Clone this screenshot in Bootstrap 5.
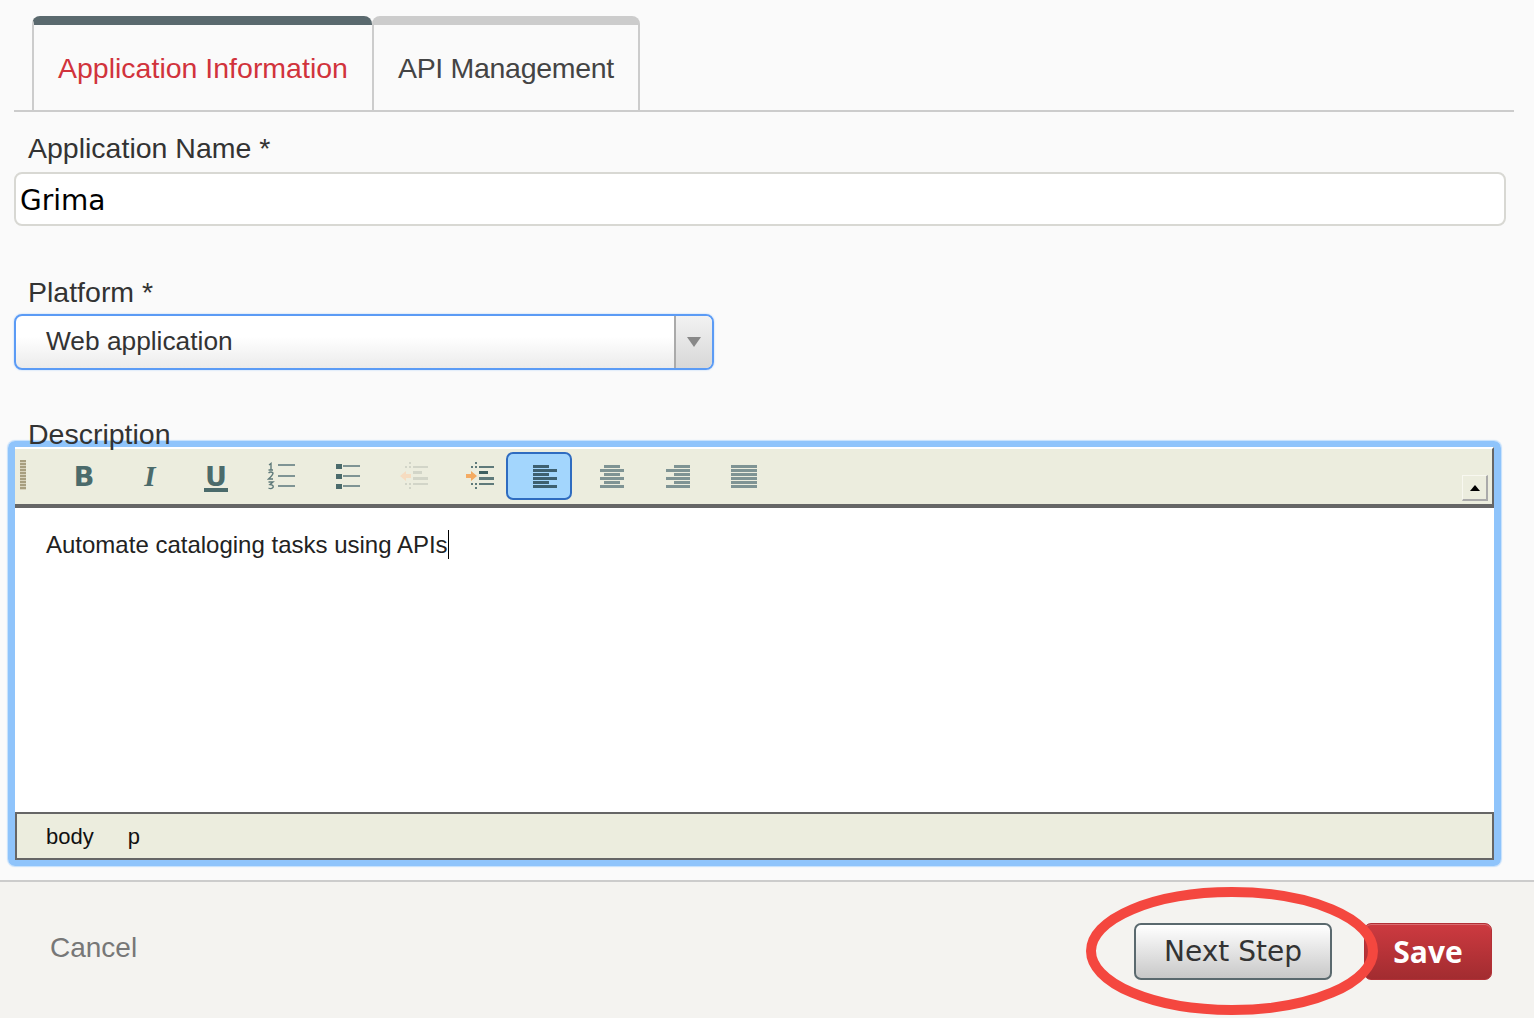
<!DOCTYPE html>
<html lang="en">

<head>
    <meta charset="UTF-8" />
    <title>Application Information</title>
    <link href="https://cdn.jsdelivr.net/npm/bootstrap@5.3.2/dist/css/bootstrap.min.css" rel="stylesheet" />
    <style>
        body {
            background: #fafafa;
            font-family: "Liberation Sans", Arial, sans-serif;
            color: #333;
            overflow: hidden;
        }

        .app-tabs {
            margin: 16px 20px 0 14px;
            padding-left: 18px;
            border-bottom: 2px solid #ccc;
            height: 96px;
            flex-wrap: nowrap;
        }

        .app-tabs .nav-link {
            height: 96px;
            margin: 0;
            padding: 21px 24px 0 24px;
            font-size: 28.5px;
            letter-spacing: -0.3px;
            line-height: 44px;
            color: #444;
            background: transparent;
            border-width: 9px 2px 0 2px;
            border-style: solid;
            border-color: #ccc;
            border-radius: 8px 8px 0 0;
        }

        .app-tabs .nav-link.active {
            letter-spacing: 0;
            color: #d1333c;
            background: transparent;
            border-color: #5a696e #ccc #ccc #ccc;
            border-right-width: 0;
        }

        .field-label {
            display: block;
            margin: 0;
            padding-left: 28px;
            font-size: 28.5px;
            line-height: 40px;
            color: #333;
        }

        .label-name {
            margin-top: 16px;
        }

        .label-platform {
            margin-top: 46px;
            margin-bottom: 2px;
        }

        .label-desc {
            position: relative;
            z-index: 1;
            margin-top: 44px;
            margin-bottom: -13px;
        }

        .name-input {
            width: 1492px;
            margin: 4px 0 0 14px;
            height: 54px;
            padding: 2px 4px 0;
            font-family: "DejaVu Sans", sans-serif;
            font-size: 28px;
            color: #000;
            border: 2px solid #d8d8d3;
            border-radius: 8px;
        }

        .platform-box {
            width: 700px;
            height: 56px;
            margin-left: 14px;
            border: 2px solid #5b9bf5;
            border-radius: 8px;
            background: linear-gradient(#fff 40%, #ebebeb);
            box-shadow: 0 0 2px #a9cdfb;
            overflow: hidden;
        }

        .platform-text {
            padding-left: 30px;
            font-size: 26.3px;
            color: #333;
        }

        .platform-arrow {
            width: 38px;
            border-left: 2px solid #aaa;
            background: linear-gradient(#f2f2f2, #d8d8d8);
        }

        .arrow-down {
            border-left: 7px solid transparent;
            border-right: 7px solid transparent;
            border-top: 10px solid #888;
        }

        .editor-ring {
            position: relative;
            width: 1493px;
            height: 425px;
            margin-left: 8px;
            border: solid #8fc4fb;
            border-width: 6px 7px;
            border-radius: 7px;
            box-shadow: 0 0 1px 1px #c3dffc;
        }

        .editor-bar {
            height: 61px;
            background: #ecedde;
            border-top: 2px solid #fff;
            border-right: 2px solid #666;
            border-bottom: 4px solid #666;
            padding-top: 3px;
        }

        .grip {
            width: 6px;
            height: 30px;
            margin: 8px 25px 0 5px;
            background: repeating-linear-gradient(#a89f80 0 2px, #d8d3bd 2px 3px);
        }

        .tool {
            width: 66px;
            height: 48px;
            flex: none;
            border: 2px solid transparent;
            border-radius: 7px;
        }

        .tool.on {
            margin: 0 7px 0 -7px;
            padding-left: 12px;
            background: #a3d6fd;
            border-color: #2f6cc0;
        }

        .glyph {
            font-family: "DejaVu Sans", sans-serif;
            font-weight: 700;
            font-size: 27px;
            line-height: 1;
            color: #4b6b6b;
        }

        .glyph-i {
            font-family: "Liberation Serif", serif;
            font-style: italic;
            font-size: 29px;
        }

        .glyph-u {
            margin-top: 5px;
            padding: 0 1px 1px;
            border-bottom: 4px solid #4b6b6b;
            line-height: 21px;
        }

        .collapse-btn {
            position: absolute;
            right: 6px;
            top: 28px;
            width: 26px;
            height: 26px;
            border-top: 1px solid #f8f8f0;
            border-left: 1px solid #f8f8f0;
            border-right: 2px solid #aaa;
            border-bottom: 2px solid #aaa;
        }

        .arrow-up {
            border-left: 5px solid transparent;
            border-right: 5px solid transparent;
            border-bottom: 6px solid #000;
        }

        .editor-body {
            height: 304px;
            background: #fff;
            padding: 19px 0 0 31px;
            font-size: 24px;
            line-height: 36px;
            color: #222;
        }

        .caret-bar {
            display: inline-block;
            height: 29px;
            margin-bottom: -6px;
            border-left: 1.5px solid #000;
        }

        .editor-status {
            height: 48px;
            background: #ecedde;
            border: 2px solid #666;
            padding-left: 29px;
            gap: 34px;
            font-size: 22px;
            color: #111;
        }

        .page-foot {
            position: relative;
            margin-top: 14px;
            background: #f4f3f0;
            border-top: 2px solid #ccc;
            padding: 41px 42px 0 50px;
        }

        .cancel-link {
            font-size: 28px;
            line-height: 50px;
            color: #777;
            text-decoration: none;
        }

        .step-btn,
        .save-btn {
            height: 57px;
            font-size: 28px;
            padding: 0;
            border-radius: 7px;
        }

        .step-btn {
            width: 198px;
            font-family: "DejaVu Sans", sans-serif;
            color: #333;
            background: linear-gradient(#fff, #c8c8c8);
            border: 2px solid #5a696e;
        }

        .save-btn {
            width: 128px;
            margin-left: 32px;
            font-family: "Open Sans", sans-serif;
            font-size: 30px;
            line-height: 52px;
            color: #fff;
            font-weight: 700;
            background: linear-gradient(#cd3a40, #a22c30);
            border: 1px solid #b23036;
            box-shadow: inset 0 1px 0 rgba(255, 255, 255, 0.25);
        }

        .red-ring {
            position: absolute;
            left: 1086px;
            top: 4px;
            pointer-events: none;
        }
    </style>
</head>

<body>
    <div class="d-flex flex-column vh-100">
        <ul class="nav nav-tabs app-tabs">
            <li class="nav-item"><a class="nav-link active" href="#">Application Information</a></li>
            <li class="nav-item"><a class="nav-link" href="#">API Management</a></li>
        </ul>

        <label class="field-label label-name" for="appName">Application Name *</label>
        <input id="appName" class="form-control name-input" type="text" value="Grima" />

        <label class="field-label label-platform">Platform *</label>
        <div class="platform-box d-flex">
            <div class="platform-text flex-grow-1 d-flex align-items-center">Web application</div>
            <div class="platform-arrow d-flex align-items-center justify-content-center"><span class="arrow-down"></span></div>
        </div>

        <label class="field-label label-desc">Description</label>
        <div class="editor-ring">
            <div class="editor-bar d-flex align-items-start">
                <span class="grip"></span>
                <span class="tool d-flex align-items-center justify-content-center"><span class="glyph">B</span></span>
                <span class="tool d-flex align-items-center justify-content-center"><span class="glyph glyph-i">I</span></span>
                <span class="tool d-flex align-items-center justify-content-center"><span class="glyph glyph-u">U</span></span>
                <span class="tool d-flex align-items-center justify-content-center">
                    <svg width="30" height="28" viewBox="0 0 30 28">
                        <g fill="none" stroke="#5f7a7a" stroke-width="1.4">
                            <path d="M2 3 L4 1.5 V8 M1.5 8 H6" />
                            <path d="M1.5 11 Q4 9 6 11 Q6 13 1.5 17 H6" />
                            <path d="M1.5 20 H6 L3 22.5 Q7 23 6 25.5 Q4 27.5 1.5 26" />
                        </g>
                        <g fill="#7f9494">
                            <rect x="11" y="2" width="17" height="2" />
                            <rect x="11" y="13" width="17" height="2" />
                            <rect x="11" y="23" width="17" height="2" />
                        </g>
                    </svg>
                </span>
                <span class="tool d-flex align-items-center justify-content-center">
                    <svg width="26" height="26" viewBox="0 0 26 26">
                        <g fill="#4b6b6b">
                            <rect x="1" y="1" width="6" height="5" />
                            <rect x="1" y="11" width="6" height="5" />
                            <rect x="1" y="21" width="6" height="5" />
                        </g>
                        <g fill="#7f9494">
                            <rect x="8" y="2" width="17" height="2" />
                            <rect x="8" y="12" width="17" height="2" />
                            <rect x="8" y="22" width="17" height="2" />
                        </g>
                    </svg>
                </span>
                <span class="tool d-flex align-items-center justify-content-center">
                    <svg width="30" height="28" viewBox="0 0 30 28">
                        <path d="M1 14 L7 9 V12 H12 V16 H7 V19 Z" fill="#f6dcc0" />
                        <g fill="#d2d5c8">
                            <rect x="14" y="4" width="15" height="2" />
                            <rect x="14" y="9" width="9" height="3" />
                            <rect x="14" y="15" width="15" height="3" />
                            <rect x="14" y="21" width="15" height="2" />
                            <rect x="6" y="4" width="2" height="2" />
                            <rect x="10" y="0" width="2" height="2" />
                            <rect x="10" y="4" width="2" height="2" />
                            <rect x="6" y="21" width="2" height="2" />
                            <rect x="10" y="21" width="2" height="2" />
                            <rect x="10" y="25" width="2" height="2" />
                        </g>
                    </svg>
                </span>
                <span class="tool d-flex align-items-center justify-content-center">
                    <svg width="30" height="28" viewBox="0 0 30 28">
                        <path d="M12 14 L6 9 V12 H1 V16 H6 V19 Z" fill="#f4ab62" />
                        <g fill="#5f7a7a">
                            <rect x="14" y="4" width="15" height="2" />
                            <rect x="14" y="9" width="9" height="3" fill="#3f6060" />
                            <rect x="14" y="15" width="15" height="3" />
                            <rect x="14" y="21" width="15" height="2" />
                            <rect x="6" y="4" width="2" height="2" />
                            <rect x="10" y="0" width="2" height="2" />
                            <rect x="10" y="4" width="2" height="2" />
                            <rect x="6" y="21" width="2" height="2" />
                            <rect x="10" y="21" width="2" height="2" />
                            <rect x="10" y="25" width="2" height="2" />
                        </g>
                    </svg>
                </span>
                <span class="tool on d-flex align-items-center justify-content-center">
                    <svg width="26" height="24" viewBox="0 0 26 24">
                        <g fill="#3d6070">
                            <rect x="1" y="1" width="16" height="3" />
                            <rect x="1" y="5" width="24" height="3" />
                            <rect x="1" y="9" width="16" height="3" />
                            <rect x="1" y="13" width="24" height="3" />
                            <rect x="1" y="17" width="16" height="3" />
                            <rect x="1" y="21" width="24" height="3" />
                        </g>
                    </svg>
                </span>
                <span class="tool d-flex align-items-center justify-content-center">
                    <svg width="26" height="24" viewBox="0 0 26 24">
                        <g fill="#7f9494">
                            <rect x="5" y="1" width="16" height="3" />
                            <rect x="1" y="5" width="24" height="3" />
                            <rect x="5" y="9" width="16" height="3" />
                            <rect x="1" y="13" width="24" height="3" />
                            <rect x="5" y="17" width="16" height="3" />
                            <rect x="1" y="21" width="24" height="3" />
                        </g>
                    </svg>
                </span>
                <span class="tool d-flex align-items-center justify-content-center">
                    <svg width="26" height="24" viewBox="0 0 26 24">
                        <g fill="#7f9494">
                            <rect x="9" y="1" width="16" height="3" />
                            <rect x="1" y="5" width="24" height="3" />
                            <rect x="9" y="9" width="16" height="3" />
                            <rect x="1" y="13" width="24" height="3" />
                            <rect x="9" y="17" width="16" height="3" />
                            <rect x="1" y="21" width="24" height="3" />
                        </g>
                    </svg>
                </span>
                <span class="tool d-flex align-items-center justify-content-center">
                    <svg width="26" height="24" viewBox="0 0 26 24">
                        <g fill="#7f9494">
                            <rect x="0" y="1" width="26" height="3" />
                            <rect x="0" y="5" width="26" height="3" />
                            <rect x="0" y="9" width="26" height="3" />
                            <rect x="0" y="13" width="26" height="3" />
                            <rect x="0" y="17" width="26" height="3" />
                            <rect x="0" y="21" width="26" height="3" />
                        </g>
                    </svg>
                </span>
                <span class="collapse-btn d-flex align-items-center justify-content-center"><span class="arrow-up"></span></span>
            </div>
            <div class="editor-body">Automate cataloging tasks using APIs<span class="caret-bar"></span></div>
            <div class="editor-status d-flex align-items-center"><span>body</span><span>p</span></div>
        </div>

        <div class="page-foot flex-grow-1 d-flex align-items-start">
            <a class="cancel-link me-auto" href="#">Cancel</a>
            <button class="btn step-btn" type="button">Next Step</button>
            <button class="btn save-btn" type="button">Save</button>
            <svg class="red-ring" width="292" height="130" viewBox="0 0 292 130">
                <ellipse cx="146" cy="65" rx="141" ry="59" fill="none" stroke="#f4473f" stroke-width="10" />
            </svg>
        </div>
    </div>

    <script src="https://cdn.jsdelivr.net/npm/bootstrap@5.3.2/dist/js/bootstrap.bundle.min.js"></script>
</body>

</html>
